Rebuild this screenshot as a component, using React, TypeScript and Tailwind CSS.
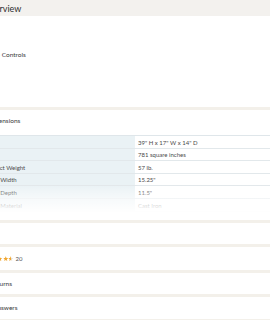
import React from "react";

const rows = [
  { label: "Size", value: "39\" H x 17\" W x 14\" D", h: "h-[13px]" },
  { label: "Area", value: "781 square inches", h: "h-[12px]" },
  { label: "Product Weight", value: "57 lb.", h: "h-[13px]" },
  { label: "Grate Width", value: "15.25\"", h: "h-[12px]" },
  { label: "Grate Depth", value: "11.5\"", h: "h-[13px]" },
  { label: "Grate Material", value: "Cast Iron", h: "h-[13px]" },
];

function Star({ half = false }: { half?: boolean }) {
  return (
    <svg width="5.5" height="5.5" viewBox="0 0 24 24" className="shrink-0">
      <defs>
        <linearGradient id="hf">
          <stop offset="50%" stopColor="#f0a630" />
          <stop offset="50%" stopColor="#e3ddd3" />
        </linearGradient>
      </defs>
      <path
        d="M12 1.5l3.1 6.9 7.4.7-5.6 5 1.7 7.4L12 17.6l-6.6 3.9 1.7-7.4-5.6-5 7.4-.7z"
        fill={half ? "url(#hf)" : "#f0a630"}
      />
    </svg>
  );
}

function Band() {
  return <div className="h-[3px] bg-[#f3f0ea]" />;
}

export default function App() {
  return (
    <div className="w-[270px] h-[320px] overflow-hidden bg-white text-[#3a3a3a] font-['Lato',sans-serif]">
      <div className="h-[16px] bg-[#f3f1ee] flex items-center">
        <span className="-ml-[17px] text-[9px] leading-none text-[#2f2f2f]">Overview</span>
      </div>
      <div className="h-[91px] pt-[35px]">
        <div className="-ml-[22px] text-[6.5px] leading-[8px]">Remote Controls</div>
      </div>
      <Band />
      <div className="pt-[7px]">
        <div className="-ml-[13px] text-[6.5px] leading-[8px]">Dimensions</div>
        <div className="relative mt-[10px] border-t border-[#dfe6ea]">
          {rows.map((r) => (
            <div key={r.label} className={`flex ${r.h} border-b border-[#e2e8eb]`}>
              <div className="w-[135px] bg-[#eaf2f5] flex items-center">
                <span className="-ml-[16px] text-[6px] whitespace-nowrap text-[#4a4a4a]">{r.label}</span>
              </div>
              <div className="flex-1 flex items-center pl-[3px]">
                <span className="text-[6px] whitespace-nowrap text-[#4a4a4a]">{r.value}</span>
              </div>
            </div>
          ))}
          <div className="absolute left-0 right-0 -bottom-[1px] h-[28px] bg-gradient-to-b from-white/0 via-white/60 to-white" />
        </div>
      </div>
      <div className="h-[8px]" />
      <Band />
      <div className="h-[21px]" />
      <Band />
      <div className="h-[23px] flex items-center">
        <div className="-ml-[14px] flex items-center">
          <Star />
          <Star />
          <Star />
          <Star />
          <Star half />
          <span className="ml-[2px] text-[6px] text-[#555]">20</span>
        </div>
      </div>
      <Band />
      <div className="h-[21px] flex items-center">
        <span className="-ml-[10px] text-[6.5px]">Returns</span>
      </div>
      <Band />
      <div className="h-[22px] flex items-center">
        <span className="-ml-[7px] text-[6.5px]">Answers</span>
      </div>
      <Band />
    </div>
  );
}
